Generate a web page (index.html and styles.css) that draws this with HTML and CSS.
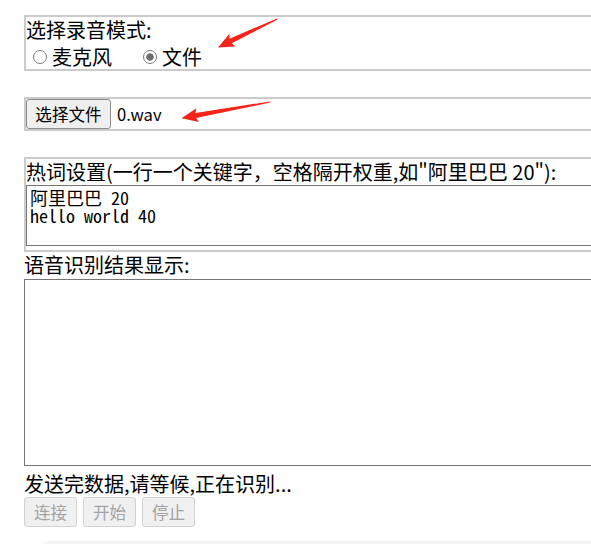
FILE: index.html
```html
<!DOCTYPE html>
<html lang="zh-CN">

<head>
    <meta charset="UTF-8">
    <meta name="viewport" content="width=device-width, initial-scale=1.0">
    <title>语音识别</title>
    <link rel="stylesheet" href="styles.css">
</head>

<body>
    <div class="page">
        <div class="panel">
            <div class="line">选择录音模式:</div>
            <div class="radio-row">
                <label class="choice"><input class="radio" type="radio" name="mode">麦克风</label>
                <label class="choice second"><input class="radio" type="radio" name="mode" checked>文件</label>
            </div>
        </div>

        <div class="panel file-panel">
            <button class="pick-btn">选择文件</button>
            <span class="file-name">0.wav</span>
        </div>

        <div class="panel hot-panel">
            <div class="line">热词设置(一行一个关键字，空格隔开权重,如"阿里巴巴 20"):</div>
            <textarea class="hot-words" rows="3">阿里巴巴 20
hello world 40</textarea>
        </div>

        <div class="line">语音识别结果显示:</div>
        <textarea class="result"></textarea>

        <div class="line status">发送完数据,请等候,正在识别...</div>
        <div class="btn-row">
            <button class="ctrl-btn" disabled>连接</button>
            <button class="ctrl-btn" disabled>开始</button>
            <button class="ctrl-btn" disabled>停止</button>
        </div>
        <div class="player"></div>
    </div>

    <!-- annotation arrows -->
    <svg class="marks" width="591" height="544" viewBox="0 0 591 544">
        <polygon fill="#f5241b" points="277,18.4 277.6,19.6 231.7,43.3 235.4,46.4 218,47.5 229.4,33.8 229.5,38.7" />
        <polygon fill="#f5241b" points="270.2,101.4 270.4,102.6 196.2,118.0 198.9,122.0 181.5,118.2 196.4,108.2 195.4,113.0" />
    </svg>
</body>

</html>
```

FILE: styles.css
```css
html {
    overflow: hidden;
}

body {
    margin: 0;
    font-family: "Noto Sans CJK SC", "Liberation Sans", sans-serif;
    font-size: 20px;
    color: #000;
    background-color: #fff;
}

.page {
    padding: 15px 0 0 24px;
    width: 720px;
}

.panel {
    border: 2px solid #cbcbcb;
    margin-bottom: 26px;
}

.line {
    height: 26px;
    line-height: 26px;
    white-space: nowrap;
}

.radio-row {
    display: flex;
    align-items: center;
    height: 26px;
}

.choice {
    display: flex;
    align-items: center;
}

.second {
    margin-left: 24px;
}

.radio {
    appearance: none;
    -webkit-appearance: none;
    box-sizing: border-box;
    width: 14px;
    height: 14px;
    margin: 2px 5px 0 7px;
    border: 1px solid #7a7a7a;
    border-radius: 50%;
    background-color: #fff;
}

.radio:checked {
    background: radial-gradient(circle, #6e6e6e 0 3.4px, #fff 4px);
}

.file-panel {
    display: flex;
    align-items: center;
    height: 30px;
}

.pick-btn {
    width: 85px;
    height: 30px;
    padding: 0;
    font-family: inherit;
    font-size: 16.6px;
    color: #000;
    background-color: #efefef;
    border: 1px solid #8a8a8a;
    border-radius: 3px;
}

.file-name {
    margin-left: 6px;
    font-size: 16.6px;
}

.hot-words {
    display: block;
    box-sizing: border-box;
    width: 680px;
    height: 61px;
    margin: 0 0 4px 0;
    padding: 2px 3px;
    border: 1px solid #767676;
    font-family: "Noto Sans Mono CJK SC", "Liberation Mono", monospace;
    font-size: 18px;
    line-height: 18px;
    resize: none;
    color: #000;
}

.hot-panel {
    margin-bottom: 0;
}

.result {
    display: block;
    box-sizing: border-box;
    width: 700px;
    height: 187px;
    margin: 1px 0 0 0;
    border: 1px solid #767676;
    resize: none;
}

.status {
    margin-top: 5px;
}

.btn-row {
    display: flex;
    gap: 6px;
}

.ctrl-btn {
    width: 53px;
    height: 30px;
    padding: 0;
    font-family: inherit;
    font-size: 16.6px;
    color: #a3a3a3;
    background-color: #f0f0f0;
    border: 1px solid #d2d2d2;
    border-radius: 3px;
}

.player {
    width: 620px;
    height: 54px;
    margin: 14px 0 0 19px;
    border-radius: 5px;
    background-color: #f1f3f4;
}

.marks {
    position: absolute;
    top: 0;
    left: 0;
    pointer-events: none;
}
```
